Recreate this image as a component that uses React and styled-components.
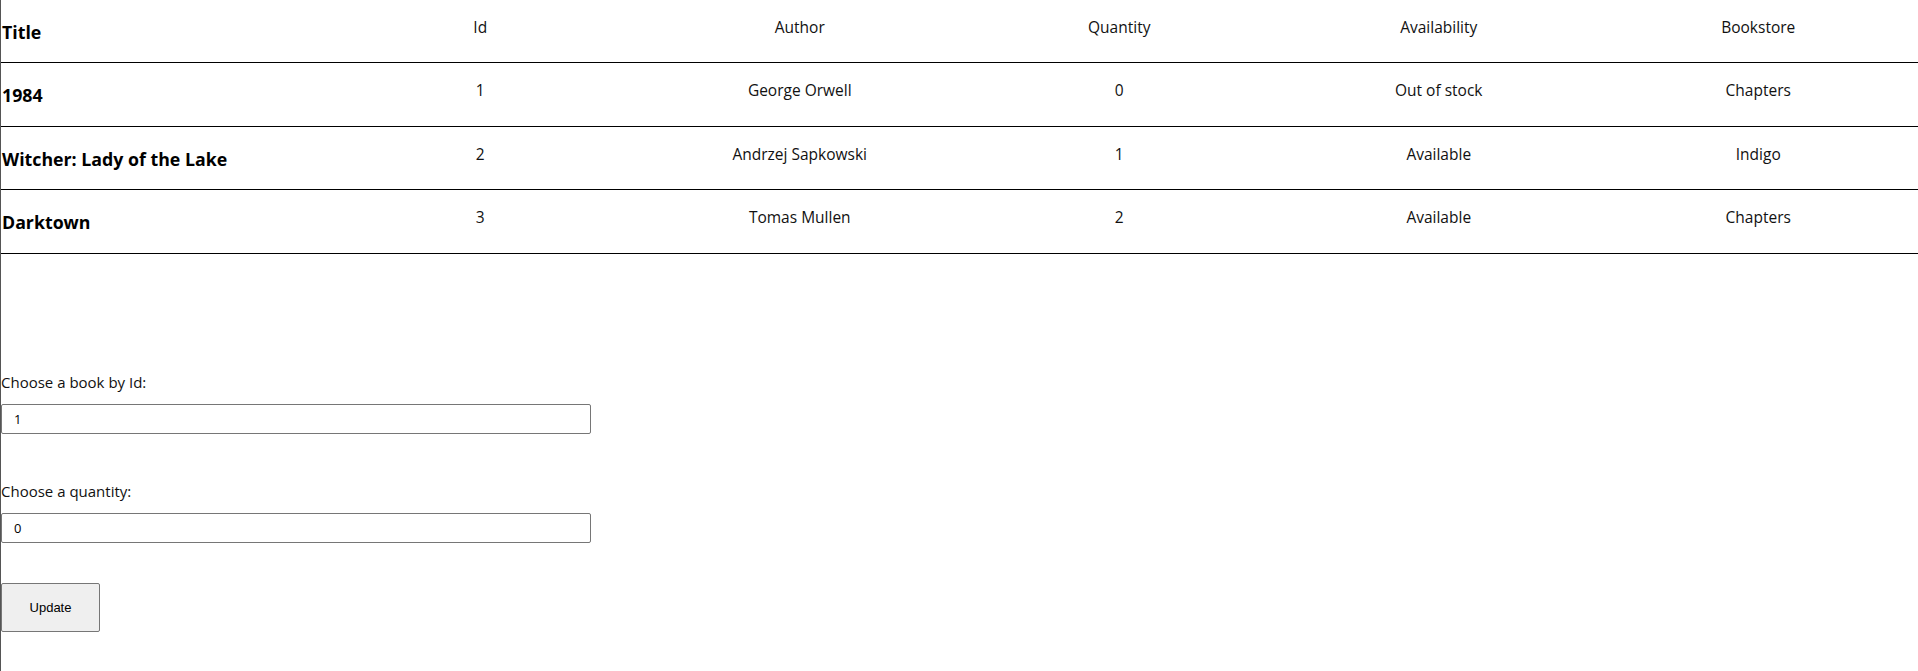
import React from "react";
import styled, { createGlobalStyle } from "styled-components";

const BOOKS = [
  { id: 1, title: "1984", author: "George Orwell", quantity: 0, store: "Chapters" },
  { id: 2, title: "Witcher: Lady of the Lake", author: "Andrzej Sapkowski", quantity: 1, store: "Indigo" },
  { id: 3, title: "Darktown", author: "Tomas Mullen", quantity: 2, store: "Chapters" },
];

const ROW_HEIGHTS = [64, 63, 64];

function App() {
  return (
    <Page>
      <GlobalStyle />
      <BookTable>
        <thead>
          <Row $height={62}>
            <TitleCell as="th">Title</TitleCell>
            <Cell as="th">Id</Cell>
            <Cell as="th">Author</Cell>
            <Cell as="th">Quantity</Cell>
            <Cell as="th">Availability</Cell>
            <Cell as="th">Bookstore</Cell>
          </Row>
        </thead>
        <tbody>
          {BOOKS.map((book, i) => (
            <Row key={book.id} $height={ROW_HEIGHTS[i]}>
              <TitleCell>{book.title}</TitleCell>
              <Cell>{book.id}</Cell>
              <Cell>{book.author}</Cell>
              <Cell>{book.quantity}</Cell>
              <Cell>{book.quantity > 0 ? "Available" : "Out of stock"}</Cell>
              <Cell>{book.store}</Cell>
            </Row>
          ))}
        </tbody>
      </BookTable>

      <UpdateForm onSubmit={(e) => e.preventDefault()}>
        <Field $top={118}>
          <Label htmlFor="book-id">Choose a book by Id:</Label>
          <Input id="book-id" defaultValue="1" />
        </Field>
        <Field $top={47}>
          <Label htmlFor="book-qty">Choose a quantity:</Label>
          <Input id="book-qty" defaultValue="0" />
        </Field>
        <Button type="submit">Update</Button>
      </UpdateForm>
    </Page>
  );
}
export default App;

const GlobalStyle = createGlobalStyle`
  body {
    margin: 0;
    background: #fff;
    font-family: "Open Sans", "Noto Sans", sans-serif;
    color: #000;
  }
`;

const Page = styled.div`
  min-height: 100vh;
  border-left: 1px solid #555;
  box-sizing: border-box;
`;

const BookTable = styled.table`
  width: 100%;
  table-layout: fixed;
  border-collapse: collapse;
  border-spacing: 0;
`;

const Row = styled.tr`
  height: ${(p) => p.$height}px;
  border-bottom: 1px solid #000;
`;

const Cell = styled.td`
  padding: 17px 0 0;
  vertical-align: top;
  text-align: center;
  font-size: 15.5px;
  font-weight: 400;
  line-height: 21px;
  color: #111;
`;

const TitleCell = styled.td`
  padding: 20px 0 0 1px;
  vertical-align: top;
  text-align: left;
  font-size: 17.75px;
  font-weight: 700;
  line-height: 25px;
  color: #000;
`;

const UpdateForm = styled.form`
  display: flex;
  flex-direction: column;
  align-items: flex-start;
`;

const Field = styled.div`
  display: flex;
  flex-direction: column;
  gap: 12px;
  margin-top: ${(p) => p.$top}px;
`;

const Label = styled.label`
  font-size: 15px;
  line-height: 20px;
  color: #111;
`;

const Input = styled.input`
  box-sizing: border-box;
  width: 590px;
  height: 30px;
  margin: 0;
  padding: 0 12px;
  border: 1px solid #767676;
  border-radius: 2px;
  font-family: "Open Sans", sans-serif;
  font-size: 13px;
  color: #000;
  background: #fff;
`;

const Button = styled.button`
  box-sizing: border-box;
  width: 99px;
  height: 49px;
  margin-top: 40px;
  border: 1px solid #767676;
  border-radius: 2px;
  background: #efefef;
  font-family: "Liberation Sans", Arial, sans-serif;
  font-size: 13px;
  color: #000;
`;
